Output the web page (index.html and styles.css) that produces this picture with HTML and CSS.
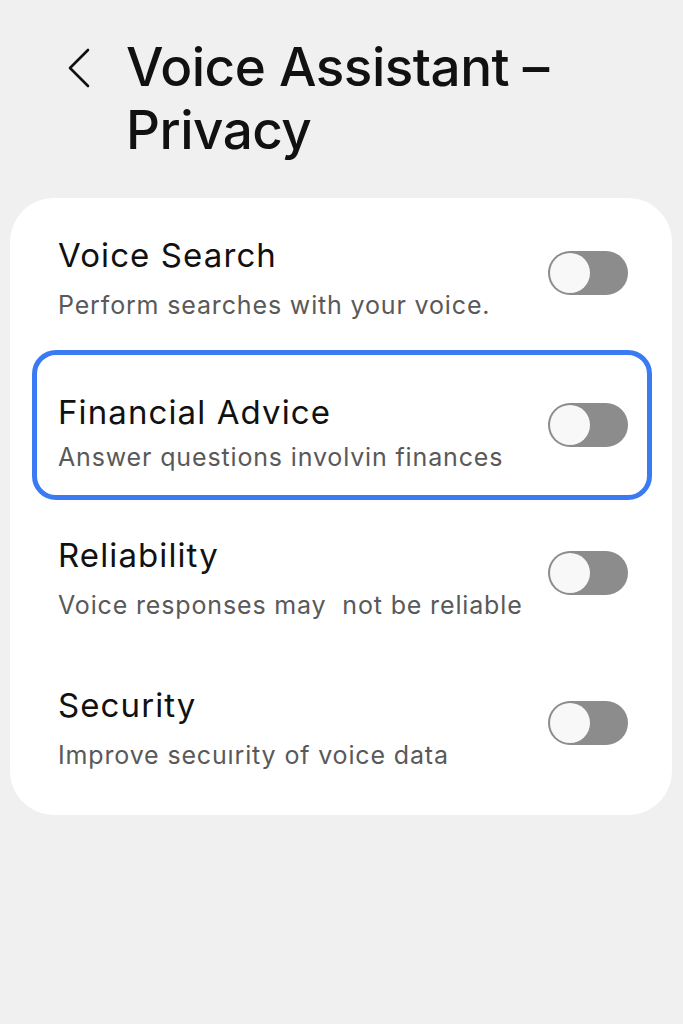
FILE: index.html
```html
<!DOCTYPE html>
<html lang="en">
<head>
  <meta charset="UTF-8" />
  <meta name="viewport" content="width=device-width, initial-scale=1.0"/>
  <title>Voice Assistant – Privacy</title>
  <link rel="stylesheet" href="styles.css">
</head>
<body>
  <header class="top-bar">
    <button class="back-btn" aria-label="Back">
      <svg width="24" height="42" viewBox="0 0 24 42">
        <polyline points="21,3 3,21 21,39" fill="none" stroke="#111" stroke-width="2.6" stroke-linecap="round" stroke-linejoin="round"/>
      </svg>
    </button>
    <h1>Voice Assistant –<br>Privacy</h1>
  </header>

  <div class="card">
    <div class="row">
      <div class="row-text">
        <div class="row-title">Voice Search</div>
        <div class="row-sub">Perform searches with your voice.</div>
      </div>
      <div class="toggle"><span class="knob"></span></div>
    </div>

    <div class="row selected">
      <div class="row-text">
        <div class="row-title">Financial Advice</div>
        <div class="row-sub">Answer questions involvin finances</div>
      </div>
      <div class="toggle"><span class="knob"></span></div>
    </div>

    <div class="row">
      <div class="row-text">
        <div class="row-title">Reliability</div>
        <div class="row-sub">Voice responses may&nbsp; not be reliable</div>
      </div>
      <div class="toggle"><span class="knob"></span></div>
    </div>

    <div class="row">
      <div class="row-text">
        <div class="row-title">Security</div>
        <div class="row-sub">Improve secuırity of voice data</div>
      </div>
      <div class="toggle"><span class="knob"></span></div>
    </div>
  </div>
</body>
</html>
```

FILE: styles.css
```css
body {
  margin: 0;
  padding: 0;
  background: #f0f0f0;
  font-family: Inter, "Noto Sans", sans-serif;
  color: #111;
}

/* Page header */
.top-bar {
  display: flex;
  align-items: flex-start;
  padding: 36px 0 0 67px;
}

.back-btn {
  background: none;
  border: none;
  padding: 0;
  margin: 11px 35px 0 0;
  cursor: pointer;
}

.back-btn svg {
  display: block;
}

h1 {
  margin: 0;
  font-size: 53px;
  line-height: 63px;
  font-weight: 500;
  letter-spacing: -0.5px;
}

/* Settings card */
.card {
  margin: 36px 11px 0 10px;
  background: #fff;
  border-radius: 44px;
  padding: 0 0 17px;
}

.row {
  display: flex;
  align-items: center;
  justify-content: space-between;
  height: 150px;
  box-sizing: border-box;
  padding: 0 44px 0 48px;
}

.row-text {
  padding-top: 10px;
}

.row.selected {
  margin: 0 20px 0 22px;
  border: 5px solid #3a7af3;
  border-radius: 24px;
  padding: 0 19px 0 21px;
  transform: translateY(2px);
}

.row.selected .row-text {
  padding-top: 14px;
}

.row.selected .row-sub {
  margin-top: 9px;
}

.row-title {
  font-size: 33px;
  line-height: 40px;
  letter-spacing: 1.1px;
}

.row-sub {
  margin-top: 14px;
  font-size: 25px;
  line-height: 32px;
  letter-spacing: 0.85px;
  color: #595959;
}

/* Switch, off state */
.toggle {
  position: relative;
  width: 80px;
  height: 44px;
  border-radius: 22px;
  background: #8c8c8c;
  flex-shrink: 0;
}

.knob {
  position: absolute;
  left: 2px;
  top: 2px;
  width: 40px;
  height: 40px;
  border-radius: 50%;
  background: #f8f8f8;
}
```
